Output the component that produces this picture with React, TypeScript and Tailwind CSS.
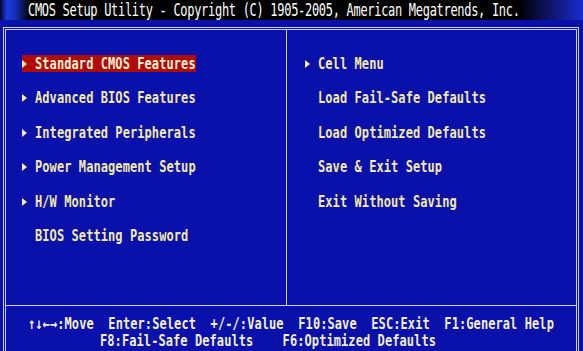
import React from 'react';

const leftItems = [
  { label: 'Standard CMOS Features', arrow: true, active: true },
  { label: 'Advanced BIOS Features', arrow: true },
  { label: 'Integrated Peripherals', arrow: true },
  { label: 'Power Management Setup', arrow: true },
  { label: 'H/W Monitor', arrow: true },
  { label: 'BIOS Setting Password', arrow: false },
];

const rightItems = [
  { label: 'Cell Menu', arrow: true },
  { label: 'Load Fail-Safe Defaults', arrow: false },
  { label: 'Load Optimized Defaults', arrow: false },
  { label: 'Save & Exit Setup', arrow: false },
  { label: 'Exit Without Saving', arrow: false },
];

const mono = "font-['DejaVu_Sans_Mono','Liberation_Mono',monospace]";

function Item({ label, arrow, active }: { label: string; arrow: boolean; active?: boolean }) {
  return (
    <div className="flex h-[17px] items-center">
      <div className={`flex h-[17px] items-center ${active ? 'bg-[#b00a0a]' : ''}`}>
        <span className="flex w-[13px] items-center">
          {arrow && (
            <svg width="5" height="8" viewBox="0 0 5 8">
              <polygon points="0,0 5,4 0,8" fill="#f4eca8" />
            </svg>
          )}
        </span>
        <span
          className={`inline-block scale-y-[1.3] whitespace-pre text-[12px] font-bold tracking-[0.08px] ${
            active ? 'text-[#f8f0d0]' : 'text-[#f2eaa8]'
          }`}
        >
          {label}
        </span>
      </div>
    </div>
  );
}

export default function App() {
  return (
    <div className={`flex h-[351px] w-[583px] flex-col overflow-hidden bg-[#0a10aa] ${mono}`}>
      <div className="flex h-[20px] items-center bg-[linear-gradient(90deg,#050530_0%,#1c3ae4_1.2%,#1530c0_2.5%,#000_5%,#000_89%,#0c1460_94%,#1a2cd0_100%)] pl-[28px]">
        <span className="inline-block scale-y-[1.4] whitespace-pre text-[12px] tracking-[-0.3px] text-white">
          CMOS Setup Utility - Copyright (C) 1905-2005, American Megatrends, Inc.
        </span>
      </div>
      <div className="mt-[7px] ml-[3px] mr-[4px] flex flex-1 flex-col border-[3px] border-b-0 border-double border-[#cfd0f2]">
        <div className="grid h-[276px] grid-cols-[280px_1fr] border-b border-[#cfd0f2]">
          <div className="flex flex-col gap-[17.5px] pl-[16px] pt-[25px]">
            {leftItems.map((it) => (
              <Item key={it.label} {...it} />
            ))}
          </div>
          <div className="flex flex-col gap-[17.5px] border-l border-[#cfd0f2] pl-[18px] pt-[25px]">
            {rightItems.map((it) => (
              <Item key={it.label} {...it} />
            ))}
          </div>
        </div>
        <div className="flex flex-col pt-[9px] text-[12px] font-bold tracking-[0.08px] text-[#f2efd8]">
          <div className="flex h-[17px] items-center pl-[22px]">
            <span className="inline-block scale-y-[1.3] whitespace-pre">
              ↑↓←→:Move  Enter:Select  +/-/:Value  F10:Save  ESC:Exit  F1:General Help
            </span>
          </div>
          <div className="flex h-[17px] items-center pl-[94px]">
            <span className="inline-block scale-y-[1.3] whitespace-pre">
              F8:Fail-Safe Defaults    F6:Optimized Defaults
            </span>
          </div>
        </div>
      </div>
    </div>
  );
}
